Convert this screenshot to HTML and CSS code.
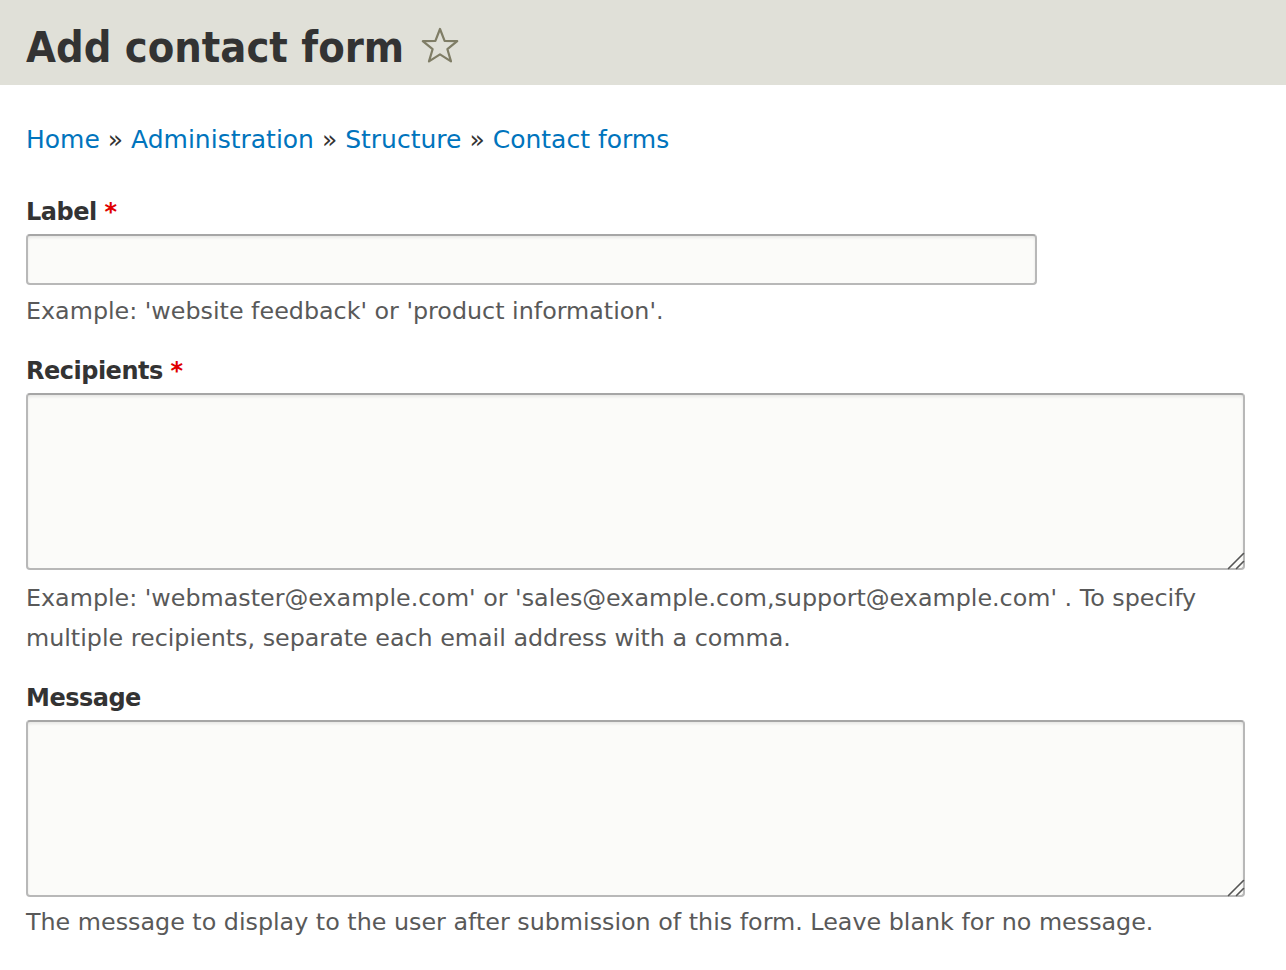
FILE: index.html
```html
<!DOCTYPE html>
<html lang="en">
<head>
<meta charset="utf-8">
<title>Add contact form</title>
<link rel="stylesheet" href="styles.css">
</head>
<body>
<header class="page-header">
  <h1 class="page-title">Add contact form</h1>
  <svg class="star" width="40" height="40" viewBox="0 0 40 40" aria-hidden="true">
    <path d="M20 3 L24.6 14.8 L37.2 15.2 L27.4 23.2 L31 35.4 L20 28.3 L9 35.4 L12.6 23.2 L2.8 15.2 L15.4 14.8 Z" fill="none" stroke="#7f7d66" stroke-width="2.2" stroke-linejoin="round"/>
  </svg>
</header>
<main class="content">
  <nav class="breadcrumb">
    <a href="#">Home</a> » <a href="#">Administration</a> » <a href="#">Structure</a> » <a href="#">Contact forms</a>
  </nav>
  <form class="form">
    <div class="form-item">
      <label class="form-label" for="label">Label <span class="req">*</span></label>
      <input class="form-text" id="label" type="text">
      <div class="description">Example: 'website feedback' or 'product information'.</div>
    </div>
    <div class="form-item">
      <label class="form-label" for="recipients">Recipients <span class="req">*</span></label>
      <div class="textarea-wrap">
        <textarea class="form-textarea" id="recipients"></textarea>
        <svg class="grip" width="18" height="18" viewBox="0 0 18 18" aria-hidden="true">
          <path d="M1.5 16.5 L16.5 1.5 M9.5 16.5 L16.5 9.5" stroke="#555" stroke-width="1.6" stroke-linecap="round"/>
        </svg>
      </div>
      <div class="description after-area">Example: 'webmaster@example.com' or 'sales@example.com,support@example.com' . To specify multiple recipients, separate each email address with a comma.</div>
    </div>
    <div class="form-item">
      <label class="form-label" for="message">Message</label>
      <div class="textarea-wrap">
        <textarea class="form-textarea" id="message"></textarea>
        <svg class="grip" width="18" height="18" viewBox="0 0 18 18" aria-hidden="true">
          <path d="M1.5 16.5 L16.5 1.5 M9.5 16.5 L16.5 9.5" stroke="#555" stroke-width="1.6" stroke-linecap="round"/>
        </svg>
      </div>
      <div class="description after-area-last">The message to display to the user after submission of this form. Leave blank for no message.</div>
    </div>
  </form>
</main>
</body>
</html>
```
FILE: styles.css
```css
html, body {
  margin: 0;
  padding: 0;
  background: #ffffff;
}
body {
  font-family: "DejaVu Sans", "Liberation Sans", sans-serif;
  font-size: 24px;
  line-height: 40px;
  color: #333333;
}
.page-header {
  background: #e0e0d8;
  height: 85px;
  display: flex;
  align-items: center;
  padding: 0 26px;
  gap: 16px;
}
.page-title {
  margin: 0;
  font-family: "DejaVu Sans Condensed", "DejaVu Sans", sans-serif;
  font-size: 43px;
  font-weight: bold;
  color: #333333;
  line-height: 1;
  padding-top: 10px;
}
.star {
  display: block;
  margin-top: 6px;
}
.content {
  padding: 0 41px 0 26px;
}
.breadcrumb {
  margin-top: 35px;
  height: 40px;
  font-size: 25px;
}
.breadcrumb a {
  color: #0074bd;
  text-decoration: none;
}
.form {
  margin-top: 32px;
}
.form-item {
  margin-bottom: 20px;
}
.form-label {
  display: block;
  font-weight: bold;
  color: #333333;
  letter-spacing: -0.5px;
  margin-bottom: 2px;
}
.req {
  color: #e00000;
  letter-spacing: 0;
}
.form-text,
.form-textarea {
  display: block;
  box-sizing: border-box;
  margin: 0;
  background: #fbfbf9;
  border: 2px solid #b8b8b8;
  border-top-color: #a6a6a6;
  border-radius: 4px;
  box-shadow: inset 0 2px 3px rgba(0, 0, 0, 0.08);
  font: inherit;
}
.form-text {
  width: 1011px;
  height: 51px;
}
.textarea-wrap {
  position: relative;
}
.form-textarea {
  width: 100%;
  height: 177px;
  resize: none;
}
.grip {
  position: absolute;
  right: 0;
  bottom: 0;
  pointer-events: none;
}
.description {
  color: #595959;
  margin-top: 6px;
  font-size: 23.8px;
}
.description.after-area {
  margin-top: 8px;
}
.description.after-area-last {
  margin-top: 5px;
}
```
